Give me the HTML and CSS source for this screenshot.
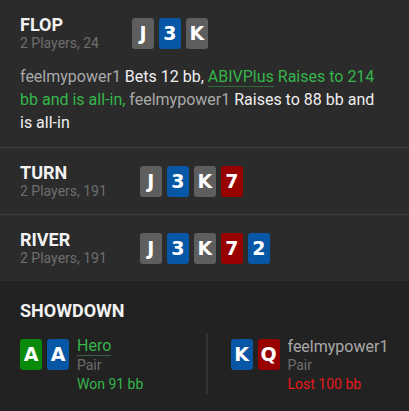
FILE: index.html
```html
<!DOCTYPE html>
<html>
<head>
<meta charset="utf-8">
<link rel="stylesheet" href="styles.css">
</head>
<body>
<div class="history">
  <section class="street street--flop">
    <div class="street-head">
      <div class="street-title">
        <h2 class="street-name">FLOP</h2>
        <div class="street-sub">2 Players, 24</div>
      </div>
      <div class="cards">
        <span class="card card--gray">J</span>
        <span class="card card--blue">3</span>
        <span class="card card--gray">K</span>
      </div>
    </div>
    <p class="actions"><span class="player">feelmypower1</span> Bets 12 bb, <span class="hero-act"><span class="hero-name">ABIVPlus</span> Raises to 214 bb and is all-in,</span> <span class="player">feelmypower1</span> Raises to 88 bb and is all-in</p>
  </section>
  <section class="street">
    <div class="street-head">
      <div class="street-title">
        <h2 class="street-name">TURN</h2>
        <div class="street-sub">2 Players, 191</div>
      </div>
      <div class="cards">
        <span class="card card--gray">J</span>
        <span class="card card--blue">3</span>
        <span class="card card--gray">K</span>
        <span class="card card--red">7</span>
      </div>
    </div>
  </section>
  <section class="street street--last">
    <div class="street-head">
      <div class="street-title">
        <h2 class="street-name">RIVER</h2>
        <div class="street-sub">2 Players, 191</div>
      </div>
      <div class="cards">
        <span class="card card--gray">J</span>
        <span class="card card--blue">3</span>
        <span class="card card--gray">K</span>
        <span class="card card--red">7</span>
        <span class="card card--blue">2</span>
      </div>
    </div>
  </section>
  <section class="showdown">
    <h2 class="street-name">SHOWDOWN</h2>
    <div class="hands">
      <div class="hand">
        <div class="cards cards--hand">
          <span class="card card--green">A</span>
          <span class="card card--blue">A</span>
        </div>
        <div class="hand-info">
          <span class="hand-player hand-player--hero">Hero</span>
          <span class="hand-rank">Pair</span>
          <span class="hand-result hand-result--won">Won 91 bb</span>
        </div>
      </div>
      <div class="hand hand--right">
        <div class="cards cards--hand">
          <span class="card card--blue">K</span>
          <span class="card card--red">Q</span>
        </div>
        <div class="hand-info">
          <span class="hand-player">feelmypower1</span>
          <span class="hand-rank">Pair</span>
          <span class="hand-result hand-result--lost">Lost 100 bb</span>
        </div>
      </div>
    </div>
  </section>
</div>
</body>
</html>
```
FILE: styles.css
```css
html, body {
  margin: 0;
  padding: 0;
  background: #222222;
}
body {
  font-family: Roboto, "Liberation Sans", sans-serif;
  color: #efefef;
}
.history {
  width: 409px;
  min-height: 411px;
  background: #2b2b2b;
}
.street {
  padding: 15px 20px;
  border-bottom: 1px solid #3c3c3c;
}
.street--flop {
  padding-bottom: 13px;
}
.street--last {
  border-bottom: none;
}
.street-head {
  display: flex;
  align-items: flex-start;
  gap: 33px;
}
.street-name {
  margin: 0;
  font-size: 18px;
  font-weight: 700;
  line-height: 20px;
  color: #f2f2f2;
}
.street-sub {
  font-size: 14px;
  line-height: 16px;
  color: #6e6e6e;
}
.cards {
  display: flex;
  gap: 5px;
  margin-top: 3px;
}
.card {
  width: 22px;
  height: 31px;
  border-radius: 3px;
  display: flex;
  align-items: center;
  justify-content: center;
  font-family: "DejaVu Sans", Verdana, sans-serif;
  font-weight: 700;
  font-size: 19px;
  line-height: 1;
  color: #ffffff;
}
.card--gray { background: #5e5e5e; }
.card--blue { background: #0857a6; }
.card--red { background: #990000; }
.card--green { background: #0a8a0a; }
.actions {
  margin: 14px 0 0;
  font-size: 16px;
  line-height: 23px;
  color: #efefef;
}
.player {
  color: #a9a9a9;
}
.hero-act {
  color: #35b54a;
}
.hero-name {
  border-bottom: 1px solid #2f6a3b;
}
.showdown {
  background: #222222;
  padding: 20px 18px 20px 20px;
}
.hands {
  display: grid;
  grid-template-columns: 1fr 1fr;
  margin-top: 12px;
}
.hand {
  display: flex;
  align-items: flex-start;
  gap: 8px;
  padding-top: 4px;
}
.hand--right {
  border-left: 2px solid #333333;
  padding-left: 23px;
}
.cards--hand {
  margin-top: 2px;
}
.hand-info {
  display: flex;
  flex-direction: column;
  align-items: flex-start;
  font-size: 14px;
  line-height: 19px;
}
.hand-player {
  font-size: 16px;
  line-height: 19px;
  color: #a9a9a9;
}
.hand-player--hero {
  color: #35b54a;
  line-height: 18px;
  border-bottom: 1px solid #3d6045;
}
.hand-rank {
  color: #6e6e6e;
}
.hand-result--won { color: #35b54a; }
.hand-result--lost { color: #e8191b; }
```
